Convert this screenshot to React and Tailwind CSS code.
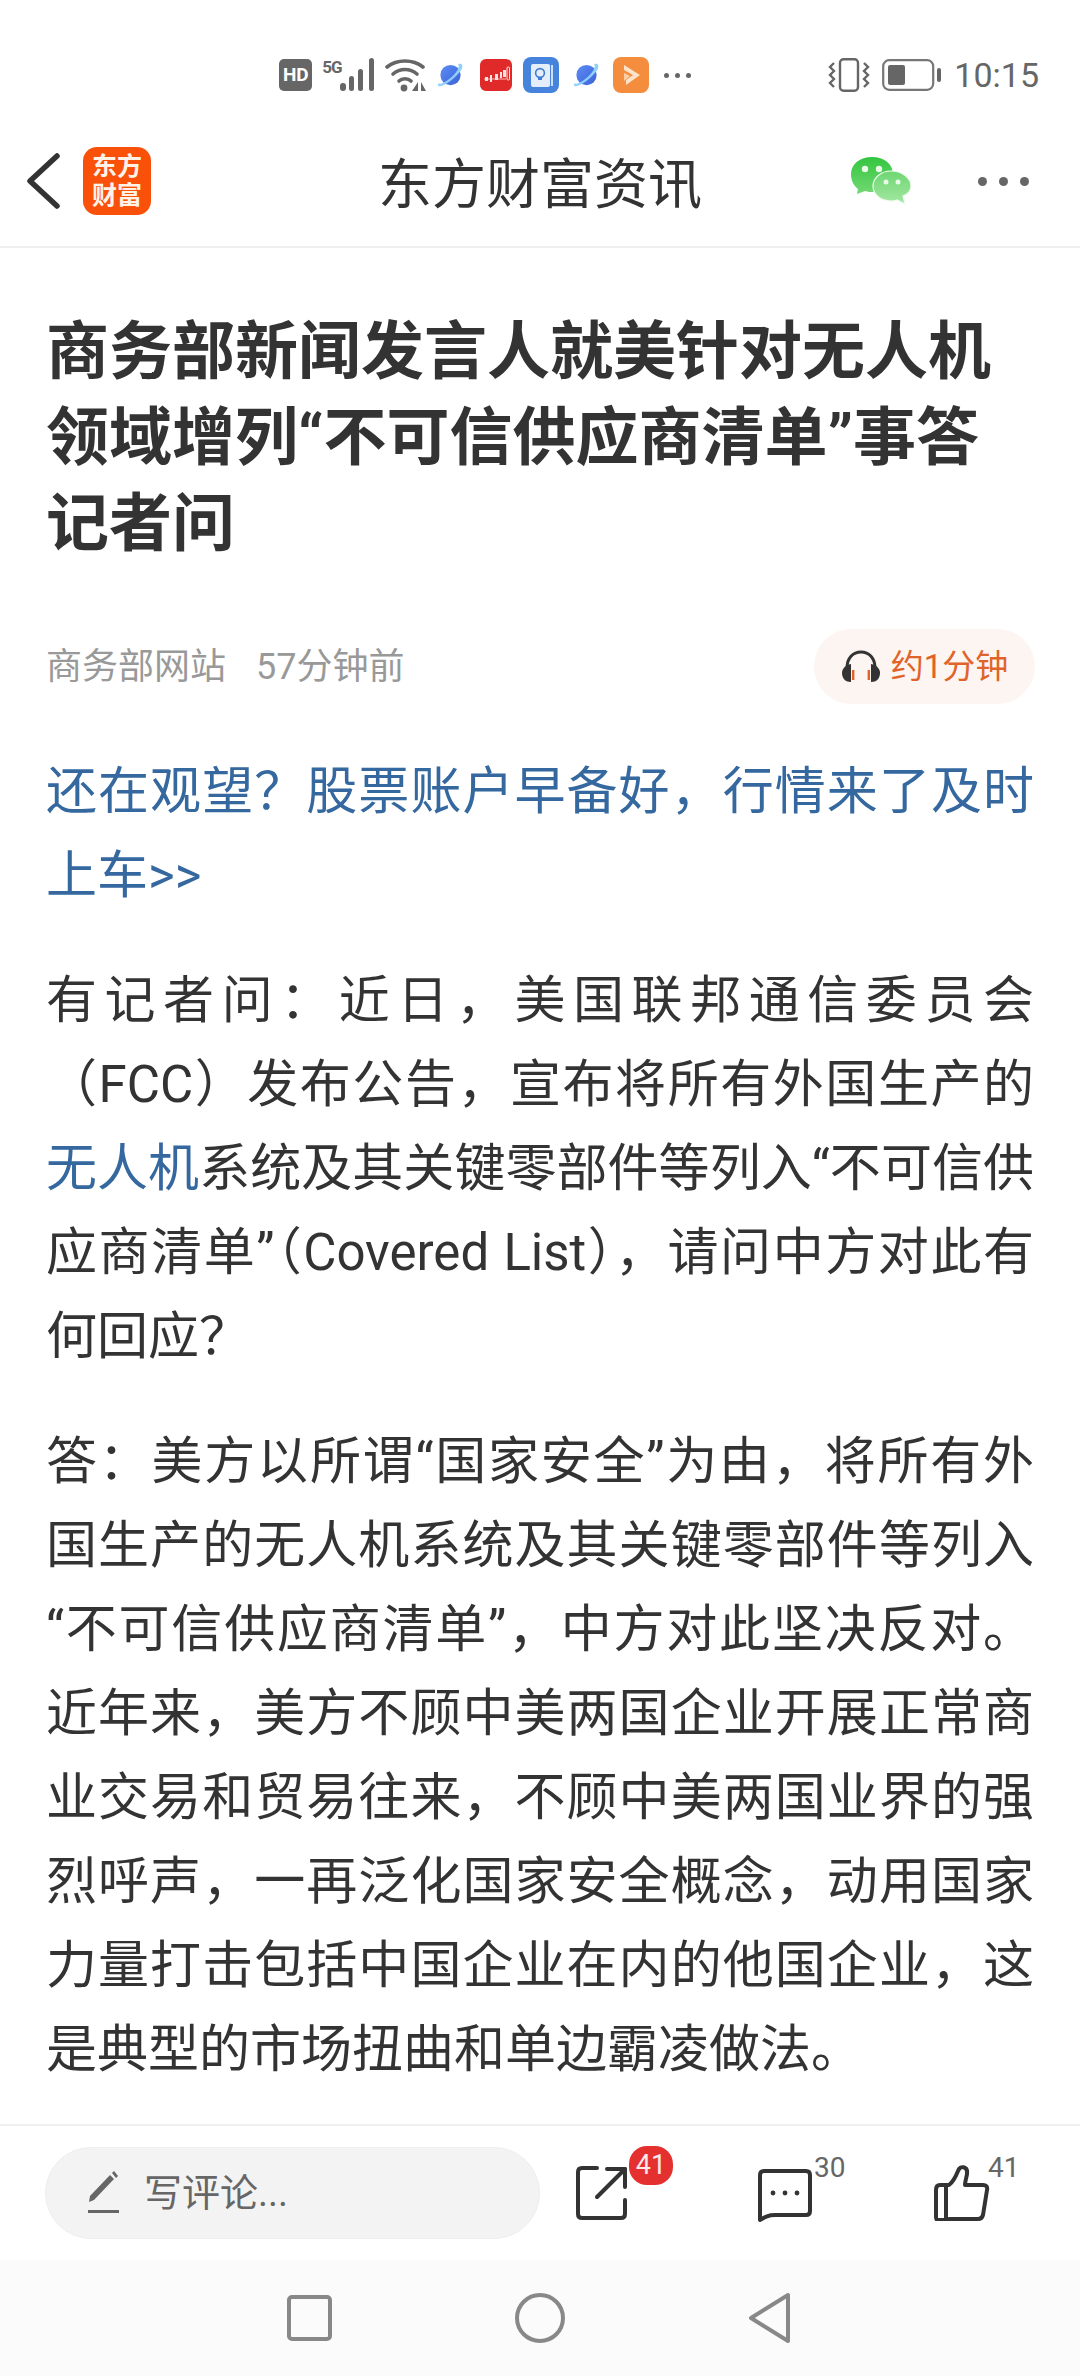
import React from 'react';

const FONT = 'font-["Roboto","Noto_Sans_CJK_SC",sans-serif]';

// ---------------------------------------------------------------------------
// Status bar icons
// ---------------------------------------------------------------------------
const SignalIcon = () => (
  <div className="relative w-[54px] h-[34px] mr-[9px]">
    <span className="absolute left-0 top-[1px] text-[17px] leading-[17px] font-bold text-[#666] tracking-[-1px]">5G</span>
    <svg className="absolute left-0 top-0" width="54" height="34" viewBox="0 0 54 34" fill="#666">
      <rect x="18" y="25" width="6" height="8" rx="3" />
      <rect x="27" y="18" width="5" height="15" rx="2.5" />
      <rect x="36" y="11" width="5" height="22" rx="2.5" />
      <rect x="47" y="0" width="5" height="33" rx="2.5" />
    </svg>
  </div>
);

const WifiIcon = () => (
  <svg width="42" height="34" viewBox="0 0 42 34" fill="none" className="mr-[10px]">
    <path d="M2 9 C12 1 28 1 38 9" stroke="#666" strokeWidth="3.6" strokeLinecap="round" />
    <path d="M8 16 C15 10 25 10 32 16" stroke="#666" strokeWidth="3.6" strokeLinecap="round" />
    <path d="M14 23 C17 20 23 20 26 23" stroke="#666" strokeWidth="3.6" strokeLinecap="round" />
    <circle cx="19" cy="30" r="3.4" fill="#666" />
    <path d="M33 24 V33 H27 Z M36 24 L41 33 H36 Z" fill="#666" />
  </svg>
);

const PlanetIcon = ({ id, className }) => (
  <svg width="27" height="28" viewBox="0 0 28 28" className={className}>
    <defs>
      <linearGradient id={id} x1="0" y1="0" x2="1" y2="1">
        <stop offset="0" stopColor="#5b8cf5" />
        <stop offset="1" stopColor="#3d63d8" />
      </linearGradient>
    </defs>
    <circle cx="14" cy="14" r="10.5" fill={`url(#${id})`} />
    <path d="M22 2.5 C26 2 27.5 4 25.5 8 C22.5 13.5 12 23 4 25.5 C1.5 26.2 0.5 25 1.5 22.5 C3 24 8 22 14 17 C20 12 24 6 22 2.5 Z" fill="#8fd0fa" />
  </svg>
);

const RedAppIcon = () => (
  <svg width="32" height="32" viewBox="0 0 32 32" className="mr-[11px]">
    <rect width="32" height="32" rx="6" fill="#e02a2a" />
    <path d="M4 20 H26" stroke="#f7b6b6" strokeWidth="1" />
    <rect x="5" y="18" width="3" height="4" fill="#fbe3e3" />
    <rect x="10" y="16" width="2" height="7" fill="#fbe3e3" />
    <rect x="15" y="15" width="3" height="6" fill="#fbe3e3" />
    <rect x="20" y="13" width="2" height="6" fill="#fbe3e3" />
    <rect x="23" y="11" width="3" height="7" fill="#fbe3e3" />
    <rect x="27" y="8" width="2.5" height="13" rx="1" fill="none" stroke="#fbe3e3" strokeWidth="1" />
  </svg>
);

const BookAppIcon = () => (
  <svg width="36" height="36" viewBox="0 0 36 36" className="mr-[14px]">
    <rect width="36" height="36" rx="8" fill="#4583dc" />
    <rect x="8" y="7" width="19" height="23" rx="2" fill="#e4eefb" />
    <rect x="28" y="8" width="2" height="21" fill="#cfe0f7" />
    <circle cx="17" cy="16" r="4.4" fill="none" stroke="#3f7cd6" strokeWidth="1.6" />
    <rect x="15" y="21" width="4" height="2" fill="#3f7cd6" />
  </svg>
);

const PlayAppIcon = () => (
  <svg width="36" height="36" viewBox="0 0 36 36" className="mr-[15px]">
    <rect width="36" height="36" rx="8" fill="#f58d3e" />
    <path d="M11 8 L27 18 L13 28 L13 23 L20 18 L11 13 Z" fill="#fde3cb" />
    <path d="M11 16 L17 19 L11 24 Z" fill="#fbd0a8" />
  </svg>
);

const VibrateIcon = () => (
  <svg width="42" height="34" viewBox="0 0 42 34" fill="none" stroke="#666" className="mr-[12px]">
    <rect x="12" y="1.2" width="18" height="31.5" rx="3.5" strokeWidth="2.4" />
    <path d="M6 5 L2 9 L6 13 L2 17 L6 21 L2 25 L6 29" strokeWidth="2.4" />
    <path d="M36 5 L40 9 L36 13 L40 17 L36 21 L40 25 L36 29" strokeWidth="2.4" />
  </svg>
);

const BatteryIcon = () => (
  <svg width="60" height="32" viewBox="0 0 60 32" className="mr-[12px]">
    <rect x="1.2" y="1.2" width="50" height="29.6" rx="6" fill="none" stroke="#777" strokeWidth="2.2" />
    <rect x="6" y="6" width="17" height="20" rx="2" fill="#666" />
    <rect x="55" y="9" width="4" height="14" rx="2" fill="#666" />
  </svg>
);

const StatusBar = () => (
  <div className="h-[84px] shrink-0 pt-[57px] pr-[41px] flex justify-end">
    <div className="flex items-center h-[36px]">
      <div className="w-[33px] h-[32px] rounded-[5px] bg-[#666] text-white text-[19px] font-bold flex items-center justify-center mr-[10px]">HD</div>
      <SignalIcon />
      <WifiIcon />
      <PlanetIcon id="planetA" className="mr-[16px]" />
      <RedAppIcon />
      <BookAppIcon />
      <PlanetIcon id="planetB" className="mr-[13px]" />
      <PlayAppIcon />
      <div className="flex gap-[6px] mr-[137px]">
        <span className="w-[5px] h-[5px] rounded-full bg-[#666]" />
        <span className="w-[5px] h-[5px] rounded-full bg-[#666]" />
        <span className="w-[5px] h-[5px] rounded-full bg-[#666]" />
      </div>
      <VibrateIcon />
      <BatteryIcon />
      <span className="text-[34px] leading-[36px] text-[#666]">10:15</span>
    </div>
  </div>
);

// ---------------------------------------------------------------------------
// Navigation
// ---------------------------------------------------------------------------
const NavBar = () => (
  <div className="relative h-[164px] shrink-0 pt-[32px] flex items-center border-b-2 border-[#f0f0f0]">
    <svg width="36" height="58" viewBox="0 0 36 58" fill="none" className="ml-[25px]">
      <path d="M32 4 L5 29 L32 54" stroke="#333" strokeWidth="5.5" strokeLinecap="round" strokeLinejoin="round" />
    </svg>
    <div className="ml-[22px] w-[68px] h-[68px] rounded-[14px] bg-[#f9500a] text-[#fff3e8] text-[25px] leading-[29px] font-bold text-center flex items-center justify-center">
      东方<br />财富
    </div>
    <div className="absolute left-0 right-0 top-[66px] text-center text-[54px] leading-[72px] text-[#333]">东方财富资讯</div>
    <svg width="62" height="50" viewBox="0 0 62 50" className="ml-auto mr-[-1px]">
      <defs>
        <linearGradient id="wxBig" x1="0" y1="0" x2="0" y2="1">
          <stop offset="0" stopColor="#33c63f" />
          <stop offset="1" stopColor="#72d873" />
        </linearGradient>
        <linearGradient id="wxSmall" x1="0" y1="0" x2="0" y2="1">
          <stop offset="0" stopColor="#6ed672" />
          <stop offset="1" stopColor="#a4e8a2" />
        </linearGradient>
      </defs>
      <path d="M8 33 L7 38 L15 35 C18 36 20 36 23 36 C36 36 43 28 43 18 C43 8 34 1 22 1 C10 1 1 8 1 18 C1 24 3 29 8 33 Z" fill="url(#wxBig)" />
      <circle cx="15" cy="13" r="3.2" fill="#e9fae8" />
      <circle cx="29" cy="13" r="3.2" fill="#e9fae8" />
      <path d="M53 40 L55 48 L47 44 C44 45 42 45 41 45 C30 45 23 38 23 30 C23 22 31 15 41 15 C52 15 61 22 61 30 C61 34 58 38 53 40 Z" fill="url(#wxSmall)" stroke="#f0fbef" strokeWidth="1.2" />
      <circle cx="36" cy="26" r="2.5" fill="#e9fae8" />
      <circle cx="48" cy="26" r="2.5" fill="#e9fae8" />
    </svg>
    <div className="ml-[67px] mr-[51px] flex gap-[12px]">
      <span className="w-[9px] h-[9px] rounded-full bg-[#666]" />
      <span className="w-[9px] h-[9px] rounded-full bg-[#666]" />
      <span className="w-[9px] h-[9px] rounded-full bg-[#666]" />
    </div>
  </div>
);

// ---------------------------------------------------------------------------
// Article
// ---------------------------------------------------------------------------
// one justified line, the breaks of the article are fixed
const Line = ({ children }) => <span className="block [text-align-last:justify]">{children}</span>;

const Article = () => (
  <div className="flex-1 overflow-hidden px-[46px]">
    <h1 className="mt-[61px] text-[63px] leading-[86px] font-bold text-[#333]">
      商务部新闻发言人就美针对无人机领域增列“不可信供应商清单”事答记者问
    </h1>
    <div className="mt-[62px] mr-[-1px] flex items-center justify-between text-[36px] text-[#999]">
      <div className="flex gap-[30px]">
        <span>商务部网站</span>
        <span>57分钟前</span>
      </div>
      <div className="w-[221px] h-[75px] rounded-full bg-[#fdf5f1] flex items-center justify-center gap-[10px] text-[#e0642a] text-[33px]">
        <svg width="40" height="34" viewBox="0 0 40 34">
          <path d="M6 22 V18 C6 8 12 2 20 2 C28 2 34 8 34 18 V22" fill="none" stroke="#333" strokeWidth="3" />
          <path d="M10 14 V32 C3 32 1 27 1 23 C1 19 4 15 10 14 Z" fill="#333" />
          <path d="M30 14 V32 C37 32 39 27 39 23 C39 19 36 15 30 14 Z" fill="#333" />
          <rect x="11" y="20" width="2.4" height="10" fill="#e0642a" />
          <rect x="26.6" y="20" width="2.4" height="10" fill="#e0642a" />
        </svg>
        <span>约1分钟</span>
      </div>
    </div>
    <div className="mt-[46px] text-[51px] leading-[84px] text-[#333]">
      <p className="text-[#35689f]">
        <Line>还在观望？股票账户早备好，行情来了及时</Line>
        <span className="block">上车&gt;&gt;</span>
      </p>
      <p className="mt-[41px]">
        <Line>有记者问：近日，美国联邦通信委员会</Line>
        <Line>（FCC）发布公告，宣布将所有外国生产的</Line>
        <Line><span className="text-[#35689f]">无人机</span>系统及其关键零部件等列入“不可信供</Line>
        <Line>应商清单”（Covered List），请问中方对此有</Line>
        <span className="block">何回应？</span>
      </p>
      <p className="mt-[41px]">
        <Line>答：美方以所谓“国家安全”为由，将所有外</Line>
        <Line>国生产的无人机系统及其关键零部件等列入</Line>
        <Line>“不可信供应商清单”，中方对此坚决反对。</Line>
        <Line>近年来，美方不顾中美两国企业开展正常商</Line>
        <Line>业交易和贸易往来，不顾中美两国业界的强</Line>
        <Line>烈呼声，一再泛化国家安全概念，动用国家</Line>
        <Line>力量打击包括中国企业在内的他国企业，这</Line>
        <span className="block">是典型的市场扭曲和单边霸凌做法。</span>
      </p>
    </div>
  </div>
);

// ---------------------------------------------------------------------------
// Bottom toolbar
// ---------------------------------------------------------------------------
const Toolbar = () => (
  <div className="h-[136px] shrink-0 border-t-2 border-[#f0f0f0] bg-white flex items-center pl-[45px]">
    <div className="w-[495px] h-[92px] rounded-full bg-[#f3f3f3] border border-[#eeeeee] flex items-center pl-[42px]">
      <svg width="32" height="44" viewBox="0 0 32 44">
        <path d="M1 31 L2 25 L22 4 L26 8 L6 29 Z" fill="#666" />
        <path d="M24 2 L26 0 L30 5 L28 7 Z" fill="#666" />
        <rect x="0" y="39" width="31" height="3" fill="#666" />
      </svg>
      <span className="ml-[24px] text-[38px] text-[#666]">写评论...</span>
    </div>

    <div className="relative ml-[36px] w-[52px] h-[54px]">
      <svg width="52" height="54" viewBox="0 0 52 54" fill="none" stroke="#333" strokeWidth="4" strokeLinecap="round" strokeLinejoin="round">
        <path d="M21 2 H6 Q2 2 2 6 V48 Q2 52 6 52 H45 Q49 52 49 48 V34" />
        <path d="M31 3 H49 V21" />
        <path d="M49 3 L21 31" />
      </svg>
      <div className="absolute left-[53px] top-[-20px] w-[44px] h-[39px] rounded-[18px] bg-[#e53030] text-[#fbe9e9] text-[27px] leading-[39px] text-center">41</div>
    </div>

    <div className="relative ml-[129px] mt-[6px] w-[56px] h-[54px]">
      <svg width="56" height="54" viewBox="0 0 56 54" fill="none" stroke="#333" strokeWidth="4" strokeLinecap="round" strokeLinejoin="round">
        <path d="M3 51 V6 Q3 2 7 2 H49 Q53 2 53 6 V42 Q53 46 49 46 H18 C11 46 8 48 3 51 Z" />
        <circle cx="16" cy="24" r="2.4" fill="#333" stroke="none" />
        <circle cx="28" cy="24" r="2.4" fill="#333" stroke="none" />
        <circle cx="40" cy="24" r="2.4" fill="#333" stroke="none" />
      </svg>
      <span className="absolute left-[57px] top-[-16px] text-[28px] leading-[30px] text-[#666]">30</span>
    </div>

    <div className="relative ml-[121px] w-[56px] h-[56px]">
      <svg width="56" height="56" viewBox="0 0 56 56" fill="none" stroke="#333" strokeWidth="4" strokeLinecap="round" strokeLinejoin="round">
        <path d="M15 55 H4 Q2 55 2 52 V25 Q2 20 6 20 H15 C19 17 22 11 24 6 C26 0 34 1 33 9 C32.5 13 31 16 31 20 H49 Q54 20 53 25 L49 50 Q48 54 44 54 H15 Z" />
        <path d="M12 21 V54" />
      </svg>
      <span className="absolute left-[54px] top-[-12px] text-[28px] leading-[30px] text-[#666]">41</span>
    </div>
  </div>
);

const SystemNav = () => (
  <div className="h-[116px] shrink-0 bg-[#fbfbfb] flex items-center pl-[287px]">
    <svg width="45" height="46" viewBox="0 0 45 46">
      <rect x="2" y="2" width="41" height="42" rx="3" fill="none" stroke="#888" strokeWidth="4" />
    </svg>
    <svg width="50" height="50" viewBox="0 0 50 50" className="ml-[183px]">
      <circle cx="25" cy="25" r="23" fill="none" stroke="#888" strokeWidth="4" />
    </svg>
    <svg width="44" height="52" viewBox="0 0 44 52" className="ml-[183px]">
      <path d="M3 26 L40 3 V49 Z" fill="none" stroke="#888" strokeWidth="4" strokeLinejoin="round" />
    </svg>
  </div>
);

export default function App() {
  return (
    <div className={`w-[1080px] h-[2376px] bg-white flex flex-col overflow-hidden ${FONT}`}>
      <StatusBar />
      <NavBar />
      <Article />
      <Toolbar />
      <SystemNav />
    </div>
  );
}
